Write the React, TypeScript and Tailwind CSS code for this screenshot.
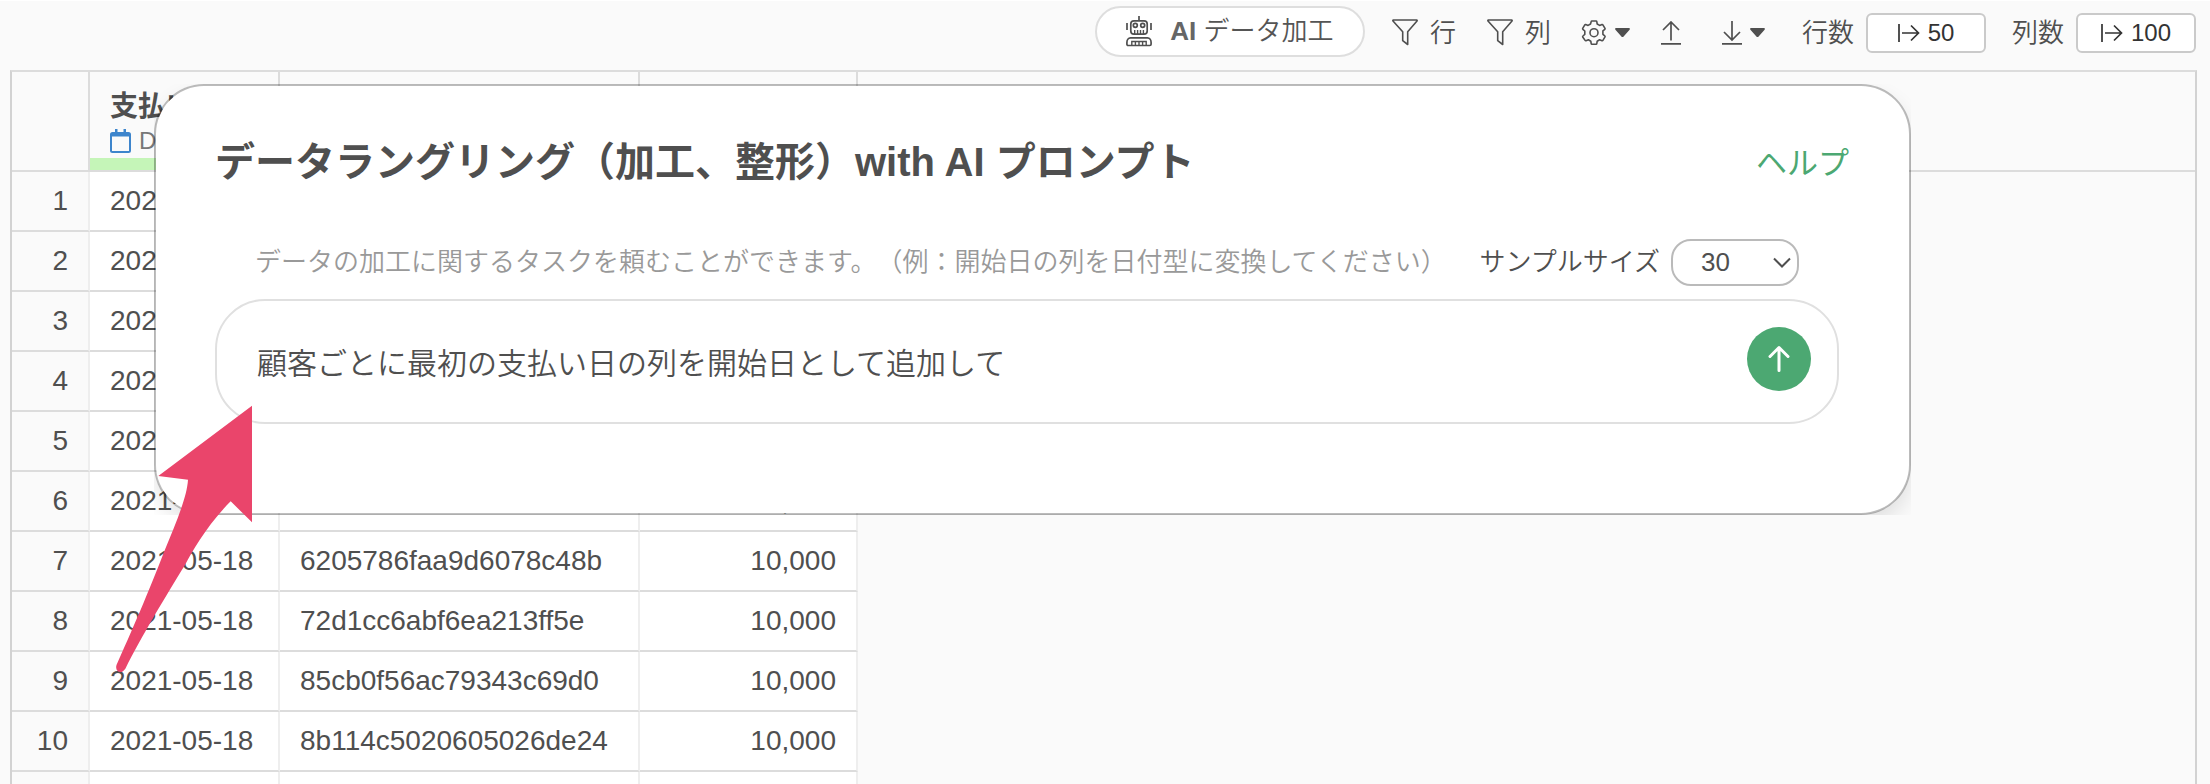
import { useState } from 'react';
import type { ReactNode } from 'react';

type Row = { date: string; customer: string; amount: string };

const rows: Row[] = [
  { date: '2021-05-18', customer: '', amount: '' },
  { date: '2021-05-18', customer: '', amount: '' },
  { date: '2021-05-18', customer: '', amount: '' },
  { date: '2021-05-18', customer: '', amount: '' },
  { date: '2021-05-18', customer: '', amount: '' },
  { date: '2021-05-18', customer: '', amount: '10,000' },
  { date: '2021-05-18', customer: '6205786faa9d6078c48b', amount: '10,000' },
  { date: '2021-05-18', customer: '72d1cc6abf6ea213ff5e', amount: '10,000' },
  { date: '2021-05-18', customer: '85cb0f56ac79343c69d0', amount: '10,000' },
  { date: '2021-05-18', customer: '8b114c5020605026de24', amount: '10,000' },
];

function RobotIcon() {
  return (
    <svg width="26" height="31" viewBox="0 0 26 31" fill="none" stroke="currentColor" strokeWidth="1.7" aria-hidden="true">
      <path d="M13 0v5M1 7v7M25 7v7" />
      <rect x="4.8" y="4.8" width="16.4" height="13.4" rx="3.2" />
      <circle cx="9.3" cy="9.3" r="2" />
      <circle cx="16.7" cy="9.3" r="2" />
      <path d="M8.7 18v-4M11.6 18v-4M14.5 18v-4M17.4 18v-4" strokeWidth="1.4" />
      <path d="M4.5 21.8h17c2.2 0 3.6 2.2 3.6 4.6v1.8c0 .8-.5 1.3-1.3 1.3H2.2c-.8 0-1.3-.5-1.3-1.3v-1.8c0-2.4 1.4-4.6 3.6-4.6z" />
      <path d="M5.8 29.3v-3.8h14.4v3.8M9.4 29v-3.5M13 29v-3.5M16.6 29v-3.5" strokeWidth="1.4" />
    </svg>
  );
}

function FunnelIcon() {
  return (
    <svg width="26" height="27" viewBox="0 0 26 27" fill="none" stroke="currentColor" strokeWidth="1.6" strokeLinejoin="round" aria-hidden="true">
      <path d="M1.3 1h23.4c.5 0 .6.6.3 1l-9.3 10.8v12.7l-5-3.8v-8.9L1 2C.7 1.6.8 1 1.3 1z" />
    </svg>
  );
}

function GearIcon() {
  return (
    <svg width="26" height="26" viewBox="0 0 26 26" fill="none" stroke="currentColor" strokeWidth="1.6" strokeLinejoin="round" aria-hidden="true">
      <path d="M10.9 1h4.2q.6 0 .7.6l.4 2.4 2.4 1.4 2.4-.9q.6-.2.9.3l2.1 3.5q.3.6-.2 1l-1.9 1.6v3.4l1.9 1.6q.5.4.2 1l-2.1 3.5q-.3.5-.9.3l-2.4-.9-2.4 1.4-.4 2.4q-.1.6-.7.6h-4.2q-.6 0-.7-.6l-.4-2.4-2.4-1.4-2.4.9q-.6.2-.9-.3L1.7 17q-.3-.6.2-1l1.9-1.6V11L1.900 9.300q-.5-.4-.2-1l2.100-3.500q.3-.5.9-.3l2.400.9L9.500 4l.7-2.400q.1-.6.7-.6z" />
      <circle cx="13" cy="12.7" r="4" />
    </svg>
  );
}

function Caret() {
  return (
    <svg width="15" height="9" viewBox="0 0 15 9" fill="currentColor" aria-hidden="true">
      <path d="M1.2 0h12.6c1 0 1.4 1 .8 1.7L8.6 8.4c-.6.7-1.6.7-2.2 0L.4 1.7C-.2 1 .2 0 1.2 0z" />
    </svg>
  );
}

function UploadIcon() {
  return (
    <svg width="20" height="24" viewBox="0 0 20 24" fill="none" stroke="currentColor" strokeWidth="1.7" aria-hidden="true">
      <path d="M10 19.5V1.5M2 9l8-8 8 8M0 22.8h20" />
    </svg>
  );
}

function DownloadIcon() {
  return (
    <svg width="20" height="24" viewBox="0 0 20 24" fill="none" stroke="currentColor" strokeWidth="1.7" aria-hidden="true">
      <path d="M10 0v18.5M2 11l8 8 8-8M0 22.8h20" />
    </svg>
  );
}

function LimitIcon() {
  return (
    <svg width="22" height="20" viewBox="0 0 22 20" fill="none" stroke="currentColor" strokeWidth="1.7" aria-hidden="true">
      <path d="M1 1v18M4 10h16M13 2.5l7.5 7.5-7.5 7.5" />
    </svg>
  );
}

function CalendarIcon() {
  return (
    <svg width="21" height="24" viewBox="0 0 21 24" fill="#3d85cc" aria-hidden="true">
      <path fillRule="evenodd" d="M5 0h2.5v3h6V0H16v3h2.5A2.5 2.5 0 0 1 21 5.5v16a2.5 2.5 0 0 1-2.5 2.5h-16A2.5 2.5 0 0 1 0 21.5v-16A2.5 2.5 0 0 1 2.5 3H5zM2 7.5V22h17V7.5z" />
    </svg>
  );
}

function LimitField({ id, label, value }: { id: string; label: string; value: string }) {
  return (
    <div className="flex items-center gap-3">
      <label htmlFor={id} className="text-[26px] leading-10 font-[350]">{label}</label>
      <button id={id} type="button" className="flex h-10 w-[120px] items-center justify-center gap-2 rounded-md border-2 border-[#cacaca] bg-white text-2xl text-[#333]">
        <LimitIcon />
        {value}
      </button>
    </div>
  );
}

function ToolButton({ label, children }: { label?: string; children: ReactNode }) {
  return (
    <button type="button" aria-label={label} className="flex items-center gap-2 font-[350]">
      {children}
    </button>
  );
}

function Toolbar() {
  return (
    <div className="flex items-center justify-end border-t border-white pt-[5px] pr-[14px] pb-[13px] text-[#4f4f4f]">
      <button type="button" className="mr-[27px] flex h-[51px] w-[270px] items-center justify-center gap-[18px] rounded-full border-2 border-[#dedede] bg-white text-[26px]">
        <RobotIcon />
        <span className="font-[350] text-[#555]">
          <span className="font-bold text-[#666]">AI</span> データ加工
        </span>
      </button>
      <div className="flex items-center pt-0.5">
        <div className="mr-[30px] flex items-center gap-[31px] text-[26px] leading-10">
          <ToolButton>
            <FunnelIcon />
            <span className="pl-1">行</span>
          </ToolButton>
          <ToolButton>
            <FunnelIcon />
            <span className="pl-1">列</span>
          </ToolButton>
        </div>
        <div className="mr-[37px] flex items-center">
          <div className="mr-[31px]">
            <ToolButton label="設定">
              <GearIcon />
              <Caret />
            </ToolButton>
          </div>
          <div className="mr-[41px]">
            <ToolButton label="アップロード">
              <UploadIcon />
            </ToolButton>
          </div>
          <ToolButton label="ダウンロード">
            <DownloadIcon />
            <Caret />
          </ToolButton>
        </div>
        <div className="flex items-center gap-[26px]">
          <LimitField id="row-limit" label="行数" value="50" />
          <LimitField id="col-limit" label="列数" value="100" />
        </div>
      </div>
    </div>
  );
}

const headCell = 'h-[100px] border-r-2 border-b-2 border-[#dcdcdc] p-0 text-left align-bottom';
const bodyCell = 'h-[60px] border-r-2 border-b-2 border-r-[#eee] border-b-[#dcdcdc] px-5 py-0';

function DataGrid() {
  return (
    <div className="mr-[13px] ml-[10px] min-h-0 flex-1 overflow-hidden border-2 border-b-0 border-t-[#dcdcdc] border-x-[#d2d2d2]">
      <table className="w-full table-fixed border-separate border-spacing-0 text-[28px] leading-10 text-[#4f4f4f]">
        <colgroup>
          <col className="w-[78px]" />
          <col className="w-[190px]" />
          <col className="w-[360px]" />
          <col className="w-[218px]" />
          <col />
        </colgroup>
        <thead>
          <tr>
            <th className={headCell} />
            <th className={headCell}>
              <div className="px-5 leading-8">支払い日</div>
              <div className="mt-0.5 flex items-center gap-2 px-5 text-2xl leading-8 font-normal text-[#777]">
                <CalendarIcon />
                Date
              </div>
              <div className="mt-px h-3 bg-[#c5f5b8]" />
            </th>
            <th className={headCell} />
            <th className={headCell} />
            <th className="border-b-2 border-[#dcdcdc]" />
          </tr>
        </thead>
        <tbody>
          {rows.map((row, i) => (
            <tr key={i}>
              <td className={`${bodyCell} text-right`}>{i + 1}</td>
              <td className={`${bodyCell} bg-white whitespace-nowrap`}>{row.date}</td>
              <td className={`${bodyCell} bg-white`}>{row.customer}</td>
              <td className={`${bodyCell} bg-white text-right`}>{row.amount}</td>
              <td />
            </tr>
          ))}
          <tr>
            <td className={bodyCell} />
            <td className={`${bodyCell} bg-white`} />
            <td className={`${bodyCell} bg-white`} />
            <td className={`${bodyCell} bg-white`} />
            <td />
          </tr>
        </tbody>
      </table>
    </div>
  );
}

function PromptDialog() {
  const [prompt, setPrompt] = useState('顧客ごとに最初の支払い日の列を開始日として追加して');
  return (
    <div role="dialog" aria-labelledby="prompt-title" className="absolute top-[84px] right-[299px] left-[154px] overflow-hidden text-[#4f4f4f]">
      <div className="rounded-[50px] border-2 border-black/25 bg-white bg-clip-padding pt-12 pr-[60px] pb-[89px] pl-[59px] shadow-[0_10px_20px_rgba(0,0,0,0.1)]">
        <div className="flex items-center justify-between">
          <h1 id="prompt-title" className="text-[40px] leading-14 font-bold">データラングリング（加工、整形）with AI プロンプト</h1>
          <a href="#help" className="pt-1 text-[31px] leading-12 text-[#4ca872]">ヘルプ</a>
        </div>
        <div className="mt-[49px] flex h-[47px] items-center pr-[50px] pl-10 text-[26px]">
          <label htmlFor="prompt" className="flex-1 font-[350] whitespace-nowrap text-[#999] [text-spacing-trim:space-all]">
            データの加工に関するタスクを頼むことができます。（例：開始日の列を日付型に変換してください）
          </label>
          <label htmlFor="sample-size" className="mr-[11px] font-[350] whitespace-nowrap">サンプルサイズ</label>
          <div className="relative">
            <select id="sample-size" defaultValue="30" className="h-[47px] w-32 appearance-none rounded-[20px] border-2 border-[#bababa] bg-white pl-7">
              <option>30</option>
              <option>50</option>
              <option>100</option>
            </select>
            <svg className="pointer-events-none absolute top-[18px] right-2" width="18" height="12" viewBox="0 0 18 12" fill="none" stroke="currentColor" strokeWidth="2" aria-hidden="true">
              <path d="M1 1.5l8 8 8-8" />
            </svg>
          </div>
        </div>
        <div className="mt-[13px] mr-[10px] flex h-[125px] items-start rounded-[50px] border-2 border-[#e0e0e0] pt-[26px] pr-[26px] pl-10">
          <input
            id="prompt"
            value={prompt}
            onChange={(e) => setPrompt(e.target.value)}
            className="h-[68px] min-w-0 flex-1 bg-transparent text-[30px] leading-12 font-[350] outline-none"
          />
          <button type="button" aria-label="送信" className="flex size-16 items-center justify-center rounded-full bg-[#4ca872] text-white">
            <svg width="22" height="28" viewBox="0 0 22 28" fill="none" stroke="currentColor" strokeWidth="3" strokeLinecap="round" strokeLinejoin="round" aria-hidden="true">
              <path d="M11 25.5V2.5M2 11.5l9-9 9 9" />
            </svg>
          </button>
        </div>
      </div>
    </div>
  );
}

function PointerArrow() {
  return (
    <svg className="pointer-events-none absolute top-[405px] left-[116px]" width="137" height="270" viewBox="0 0 137 270" fill="#ea456b" aria-hidden="true">
      <path d="M136 .7V117.3L114.700 96.300C92 119 77 145 69 160C51 189 24 234 9.500 263.500C5.500 270 -1.500 267 .5 260C14 230 34 184 48 147C60 118 71 92 72 74.700L42.300 71Z" />
    </svg>
  );
}

export default function App() {
  return (
    <main lang="ja" className="relative flex h-screen flex-col overflow-hidden bg-[#fafafa] font-['Liberation_Sans','Noto_Sans_CJK_JP',sans-serif]">
      <Toolbar />
      <DataGrid />
      <PromptDialog />
      <PointerArrow />
    </main>
  );
}
